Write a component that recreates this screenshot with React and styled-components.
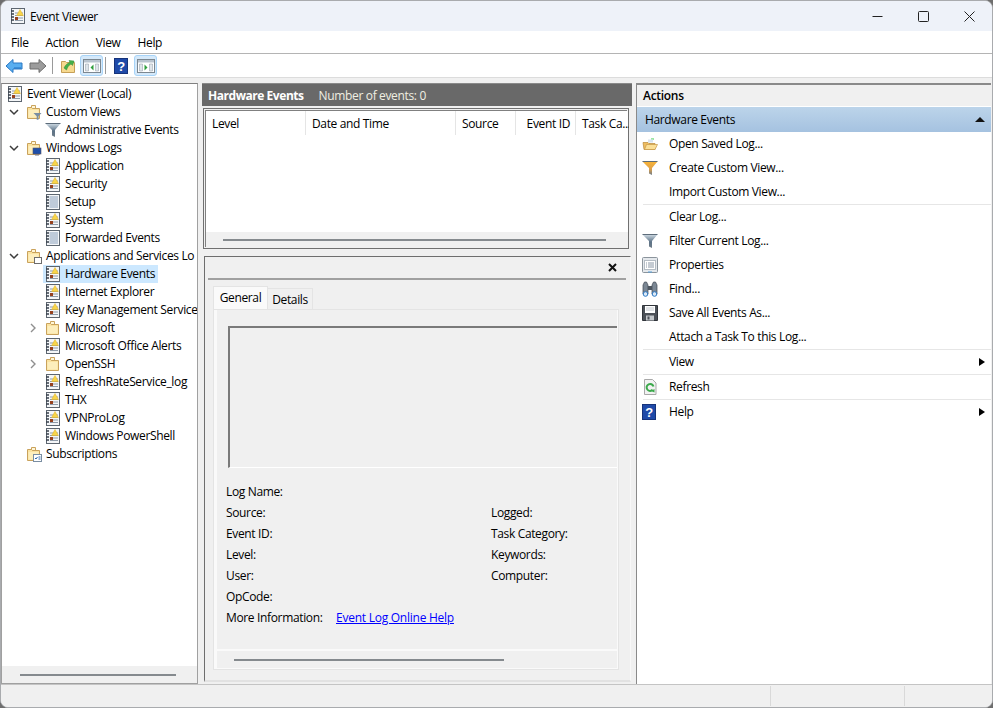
import React from 'react'
import styled, { createGlobalStyle } from 'styled-components'

const Global = createGlobalStyle`
  html, body { margin: 0; padding: 0; background: #6e6e6e; overflow: hidden; }
  body {
    font-family: "Open Sans", "Noto Sans", "Liberation Sans", sans-serif;
    font-size: 12px;
    letter-spacing: -0.35px;
    color: #000;
  }
`

const Win = styled.div`
  width: 993px;
  height: 708px;
  box-sizing: border-box;
  border: 1px solid #a9abae;
  border-radius: 8px;
  overflow: hidden;
  background: #f0f0f0;
  display: flex;
  flex-direction: column;
`
const TitleBar = styled.div`
  height: 30px;
  background: #eef2f9;
  display: flex;
  align-items: center;
  padding-left: 9px;
  flex: none;
`
const TitleText = styled.span`
  flex: 1;
  margin-left: 4px;
`
const WinBtn = styled.div`
  width: 46px;
  height: 30px;
  display: flex;
  align-items: center;
  justify-content: center;
`
const MenuBar = styled.div`
  height: 22px;
  background: #fff;
  border-bottom: 1px solid #b4b4b4;
  display: flex;
  align-items: center;
  padding-left: 1px;
  flex: none;
`
const MenuItem = styled.span`
  padding: 0 8px 0 9px;
`
const ToolBar = styled.div`
  height: 23px;
  background: #fff;
  border-bottom: 1px solid #dcdcdc;
  display: flex;
  align-items: center;
  padding-left: 2px;
  flex: none;
`
const ToolBtn = styled.div`
  width: ${p => p.$w || 22}px;
  height: 21px;
  box-sizing: border-box;
  display: flex;
  align-items: center;
  justify-content: center;
  border-radius: 3px;
  margin-right: ${p => p.$mr || 0}px;
  ${p => p.$on && 'background: #d5e9fa; border: 1px solid #a8d4f8;'}
`
const ToolSep = styled.div`
  width: 1px;
  height: 17px;
  background: #9a9a9a;
  margin: 0 4px 0 2px;
`
const Panes = styled.div`
  flex: 1;
  min-height: 0;
  display: flex;
  padding-top: 5px;
  background: #f0f0f0;
`
const TreePane = styled.div`
  width: 197px;
  box-sizing: border-box;
  margin-right: 2px;
  border: 1px solid #a0a0a0;
  border-top-color: #808080;
  background: #fff;
  display: flex;
  flex-direction: column;
  flex: none;
`
const TreeBody = styled.div`
  flex: 1;
  min-height: 0;
  padding-top: 1px;
  overflow: hidden;
`
const Row = styled.div`
  height: 18px;
  display: flex;
  align-items: center;
  white-space: nowrap;
  padding-left: ${p => p.$indent}px;
`
const Chevron = styled.div`
  width: 12px;
  margin-right: 6px;
  height: 18px;
  display: flex;
  align-items: center;
  justify-content: center;
  flex: none;
`
const TreeItem = styled.div`
  height: 18px;
  display: flex;
  align-items: center;
  margin-left: -2px;
  padding: 0 3px 0 2px;
  ${p => p.$sel && 'background: #cce8ff;'}
`
const TreeIcon = styled.div`
  width: 16px;
  height: 16px;
  flex: none;
  margin-right: 3px;
`
const Label = styled.span`
  padding-left: 1px;
  margin-bottom: 1px;
`
const HScroll = styled.div`
  height: ${p => p.$h || 17}px;
  background: #f0f0f0;
  flex: none;
  display: flex;
  align-items: center;
  padding-left: ${p => p.$left}px;
  ${p => p.$line && 'border-top: 2px solid #fafafa;'}
`
const Thumb = styled.div`
  width: ${p => p.$w}px;
  height: 2px;
  background: #858a8e;
`
const Center = styled.div`
  width: 432px;
  margin-right: 4px;
  flex: none;
  display: flex;
  flex-direction: column;
`
const CenterHead = styled.div`
  height: 23px;
  box-sizing: border-box;
  background: #696969;
  border-top: 1px solid #8a8a8a;
  color: #fff;
  display: flex;
  align-items: center;
  padding-left: 6px;
  gap: 15px;
  flex: none;
  margin: 0 0 0 2px;
`
const CenterTitle = styled.b`
  font-weight: 700;
  letter-spacing: -0.45px;
`
const CenterCount = styled.span`
  color: #f0efe2;
`
const ListBox = styled.div`
  height: 141px;
  margin: 2px 3px 0 3px;
  box-sizing: border-box;
  border: 1px solid #707070;
  padding: 2px 0 0 2px;
  background: #f0f0f0;
  display: flex;
  flex: none;
`
const ListInner = styled.div`
  flex: 1;
  min-width: 0;
  background: #fff;
  display: flex;
  flex-direction: column;
  justify-content: space-between;
  box-shadow: -1px -1px 0 #808080;
`
const Columns = styled.div`
  height: 24px;
  display: flex;
`
const Col = styled.div`
  width: ${p => p.$w}px;
  box-sizing: border-box;
  flex: none;
  display: flex;
  align-items: center;
  padding-left: 6px;
  border-right: ${p => (p.$last ? 'none' : '1px solid #e5e5e5')};
  justify-content: ${p => (p.$right ? 'flex-end' : 'flex-start')};
  padding-right: ${p => (p.$right ? '5px' : 0)};
  white-space: nowrap;
  overflow: hidden;
`
const Detail = styled.div`
  flex: 1;
  min-height: 0;
  margin: 7px 1px 2px 4px;
  box-sizing: border-box;
  border: 1px solid #f8f8f8;
  border-top: 1px solid #6e6e6e;
  border-left: 1px solid #6e6e6e;
  border-bottom: 2px solid #e2e2e2;
  display: flex;
  flex-direction: column;
  padding: 0 4px 0 3px;
`
const DetailTop = styled.div`
  height: 21px;
  border-bottom: 2px solid #a0a0a0;
  display: flex;
  align-items: center;
  justify-content: flex-end;
  padding-right: 9px;
  flex: none;
`
const TabRow = styled.div`
  display: flex;
  align-items: flex-end;
  height: 23px;
  margin: 6px 0 0 5px;
  flex: none;
`
const Tab = styled.div`
  width: ${p => p.$w}px;
  height: ${p => (p.$on ? 23 : 21)}px;
  box-sizing: border-box;
  display: flex;
  align-items: center;
  justify-content: center;
  border: 1px solid #e4e4e4;
  border-bottom: none;
  background: ${p => (p.$on ? '#fafafa' : '#f0f0f0')};
  ${p => p.$on && 'padding-bottom: 2px;'}
  ${p => !p.$on && 'border-left: none;'}
`
const TabBody = styled.div`
  flex: 1;
  min-height: 0;
  margin: 0 7px 10px 5px;
  border: 1px solid #e4e4e4;
  background: #fafafa;
  padding: 0 1px 1px 3px;
  display: flex;
`
const TabInner = styled.div`
  flex: 1;
  min-width: 0;
  background: #f0f0f0;
  display: flex;
  flex-direction: column;
`
const MsgBox = styled.div`
  height: 142px;
  margin: 16px 0 0 11px;
  box-sizing: border-box;
  border: 2px solid #7a7a7a;
  border-right: none;
  border-bottom: 1px solid #fff;
  flex: none;
`
const Fields = styled.div`
  flex: 1;
  min-height: 0;
  padding: 13px 0 0 9px;
  display: grid;
  grid-template-columns: 110px 155px 1fr;
  grid-auto-rows: 21px;
  align-items: center;
`
const Wide = styled.div`
  grid-column: 1 / -1;
  display: flex;
`
const MoreLabel = styled.span`
  width: 110px;
  flex: none;
`
const HelpLink = styled.a`
  color: #0000ff;
  text-decoration: underline;
  letter-spacing: -0.25px;
`
const Actions = styled.div`
  width: 354px;
  flex: none;
  display: flex;
  flex-direction: column;
  background: #fff;
  border-left: 1px solid #8a8a8a;
`
const ActionsTitle = styled.div`
  height: 24px;
  box-sizing: border-box;
  border-top: 2px solid #8a8a8a;
  background: #f0f0f0;
  border-bottom: 1px solid #fff;
  display: flex;
  align-items: center;
  padding-left: 6px;
  font-weight: 600;
  letter-spacing: -0.3px;
  flex: none;
`
const ActionsHead = styled.div`
  height: 25px;
  background: linear-gradient(#bcd4ea, #a5c2e0);
  display: flex;
  align-items: center;
  padding: 0 6px 0 8px;
  justify-content: space-between;
  flex: none;
`
const ActionRow = styled.div`
  height: 24px;
  display: flex;
  align-items: center;
  padding-left: 5px;
  padding-right: 6px;
  flex: none;
`
const ActionIcon = styled.div`
  width: 16px;
  height: 16px;
  margin-right: 11px;
  flex: none;
`
const ActionText = styled.span`
  flex: 1;
  margin-bottom: 2px;
`
const Caret = styled.div`
  width: 0;
  height: 0;
  border-left: 6px solid #000;
  border-top: 4.5px solid transparent;
  border-bottom: 4.5px solid transparent;
`
const CaretUp = styled.div`
  width: 0;
  height: 0;
  border-bottom: 5px solid #111;
  border-left: 5px solid transparent;
  border-right: 5px solid transparent;
`
const ActionSep = styled.div`
  height: 1px;
  margin: 0 0 0 6px;
  background: #e6e6e6;
  flex: none;
`
const StatusBar = styled.div`
  height: 23px;
  box-sizing: border-box;
  border-top: 1px solid #c4c4c4;
  flex: none;
  display: flex;
  justify-content: flex-end;
  background: #f0f0f0;
`
const StatusCell = styled.div`
  width: ${p => p.$w}px;
  margin: 1px 0;
  border-left: 1px solid #d9d9d9;
`

const LogIcon = () => (
  <svg width="16" height="16" viewBox="0 0 16 16">
    <rect x="1.5" y="0.5" width="13" height="15" fill="#f4f6f8" stroke="#5d6670" />
    <path d="M1 3h3M1 6h3M1 9h3M1 12h3" stroke="#39424c" strokeWidth="1.4" />
    <path d="M5 5h8M5 7.5h8M5 10h8M5 12.5h8" stroke="#8e9aa8" />
    <path d="M10 1.5l3.4 6H6.6z" fill="#f8d54a" stroke="#e3b321" strokeWidth=".5" />
    <rect x="5" y="9" width="3" height="3" fill="#97411e" />
  </svg>
)
const PlainLogIcon = () => (
  <svg width="16" height="16" viewBox="0 0 16 16">
    <rect x="1.5" y="0.5" width="13" height="15" fill="#f4f6f8" stroke="#5d6670" />
    <path d="M1 3h3M1 6h3M1 9h3M1 12h3" stroke="#39424c" strokeWidth="1.4" />
    <path d="M4.5 3h8.5M4.5 5h8.5M4.5 7h8.5M4.5 9h8.5M4.5 11h8.5M4.5 13h8.5" stroke="#8aa0bb" />
  </svg>
)
const Folder = ({ children }) => (
  <svg width="16" height="16" viewBox="0 0 16 16">
    <path d="M5.5 1.5h4v3h-4z" fill="#fff6d8" stroke="#caa35c" />
    <path d="M1.5 3.5h4l1 1h7v10h-12z" fill="#fbe3a0" stroke="#c9a25c" />
    <path d="M2.5 6h10v7.5h-10z" fill="#fdeebc" />
    {children}
  </svg>
)
const Funnel = ({ id = 'fg', top = '#cfdbe4', bottom = '#5d7387' }) => (
  <svg width="16" height="16" viewBox="0 0 16 16">
    <defs>
      <linearGradient id={id} x1="0" y1="0" x2="0" y2="1">
        <stop offset="0" stopColor={top} />
        <stop offset="0.55" stopColor={bottom} />
        <stop offset="1" stopColor="#6f7c88" />
      </linearGradient>
    </defs>
    <path d="M0.5 1.5h15l-5.5 6.500v7l-3-1.500V8z" fill={`url(#${id})`} />
    <path d="M0.5 1.500h15" stroke="#5d6c7a" />
  </svg>
)
const FolderFunnel = () => (
  <Folder>
    <path d="M7.5 9h8l-3 3.200v3.600h-1.800v-3.600z" fill="#7a8ea2" />
  </Folder>
)
const FolderScreen = () => (
  <Folder>
    <rect x="7" y="8" width="8" height="6" fill="#1f4fa8" stroke="#556" strokeWidth=".6" />
    <path d="M9 15h4" stroke="#778" />
  </Folder>
)
const FolderPanel = () => (
  <Folder>
    <rect x="8.5" y="9.5" width="7" height="6" fill="#fff" stroke="#6d6d6d" />
  </Folder>
)
const FolderSub = () => (
  <Folder>
    <rect x="7.5" y="8.5" width="8" height="7" fill="#fff" stroke="#7a8ea2" />
    <path d="M9 12l1 1 1.500-2M12.500 11h2M12.500 13h2" stroke="#2a66b0" fill="none" />
  </Folder>
)
const ChevronDown = () => (
  <svg width="10" height="7" viewBox="0 0 10 7">
    <path d="M1 1l4 4 4-4" fill="none" stroke="#3c3c3c" strokeWidth="1.5" />
  </svg>
)
const ChevronRight = () => (
  <svg width="7" height="10" viewBox="0 0 7 10">
    <path d="M1 1l4 4-4 4" fill="none" stroke="#8f8f8f" strokeWidth="1.4" />
  </svg>
)
const BackArrow = () => (
  <svg width="18" height="16" viewBox="0 0 18 16">
    <path d="M1 8l7-6.500V5h9v6H8v3.500z" fill="#58aef0" stroke="#2a78c4" />
    <path d="M9 9.500h7v1H9z" fill="#1f6fc0" />
  </svg>
)
const ForwardArrow = () => (
  <svg width="18" height="16" viewBox="0 0 18 16">
    <path d="M17 8l-7-6.500V5H1v6h9v3.500z" fill="#9c9c9c" stroke="#6d6d6d" />
  </svg>
)
const UpFolder = () => (
  <svg width="16" height="16" viewBox="0 0 16 16">
    <path d="M1.500 3.500h4l1 1h8v10h-13z" fill="#f7d98f" stroke="#c6a058" />
    <path d="M4 10c1.500-3 3-4.500 6-5.500L9 2.500l5 .5-1.500 4.500L11 6C9 7 7.500 9 6.500 12z" fill="#46b04a" stroke="#2f8c34" strokeWidth=".5" />
  </svg>
)
const PanelIcon = ({ right }) => (
  <svg width="18" height="14" viewBox="0 0 18 14">
    <rect x=".5" y=".5" width="17" height="13" fill="#fff" stroke="#7c8790" />
    <rect x="1" y="1" width="16" height="2.500" fill="#b9c4cf" />
    <path d="M2.500 5h3v7h-3zM12.500 5h3v7h-3z" fill="#dfe5ea" stroke="#8f9aa5" strokeWidth=".5" />
    <path d={right ? 'M7.500 5.500l3 3-3 3z' : 'M10.500 5.500l-3 3 3 3z'} fill="#2e9e3c" />
  </svg>
)
const HelpIcon = () => (
  <svg width="14" height="16" viewBox="0 0 14 16">
    <rect x=".5" y=".5" width="13" height="15" fill="#1f4aa8" stroke="#16337a" />
    <text x="7" y="13" fontSize="13" fontWeight="700" textAnchor="middle" fill="#fff" fontFamily="Liberation Sans">?</text>
  </svg>
)
const OpenLog = () => (
  <svg width="16" height="16" viewBox="0 0 16 16">
    <path d="M1 6.500h5l1 1h6v6H2z" fill="#eebc5f" stroke="#b98a3a" strokeWidth=".7" />
    <path d="M2.500 13.500l2-5h11l-2.500 5z" fill="#fbdf97" stroke="#c79a4b" strokeWidth=".7" />
    <path d="M9 3h3" stroke="#3bd04a" />
    <rect x="6" y="3.500" width="5" height="3" fill="#d8e4f0" />
  </svg>
)
const PropsIcon = () => (
  <svg width="16" height="16" viewBox="0 0 16 16">
    <rect x=".5" y=".5" width="15" height="15" rx="1" fill="#e4e8ec" stroke="#8b949c" />
    <rect x="2.500" y="3.500" width="11" height="9" fill="#fff" stroke="#b4bcc4" />
    <path d="M4 6h1M6 6h6M4 8h1M6 8h6M4 10h1M6 10h6" stroke="#8a97a6" />
    <path d="M6 15h4" stroke="#5aa0d8" />
  </svg>
)
const FindIcon = () => (
  <svg width="16" height="16" viewBox="0 0 16 16">
    <path d="M1 13V4l1.500-3h2L6 4v9zM10 13V4l1.500-3h2L15 4v9z" fill="#7b8794" stroke="#3d4650" strokeWidth=".7" />
    <path d="M6 5h4v4H6z" fill="#4d5660" />
    <circle cx="3.500" cy="13" r="2.300" fill="#dce9f6" stroke="#2b78c4" />
    <circle cx="12.500" cy="13" r="2.300" fill="#dce9f6" stroke="#2b78c4" />
  </svg>
)
const SaveIcon = () => (
  <svg width="16" height="16" viewBox="0 0 16 16">
    <path d="M.5.5h15v15H.5z" fill="#4c5158" stroke="#30343a" />
    <rect x="3" y="1" width="10" height="7" fill="#fff" />
    <path d="M4 3h8M4 5h8" stroke="#c2c8ce" />
    <rect x="4" y="10.500" width="8" height="5" fill="#c4c8cc" />
    <rect x="5.500" y="11.500" width="2" height="3" fill="#4c5158" />
  </svg>
)
const RefreshIcon = () => (
  <svg width="16" height="16" viewBox="0 0 16 16">
    <path d="M2.500.5h8l3.500 3.500v11.500H2.500z" fill="#f2f2f2" stroke="#a8a8a8" />
    <path d="M11.500 7.500a3.500 3.500 0 1 0-.8 3.300" fill="none" stroke="#3ca94c" strokeWidth="2" />
    <path d="M9 12l3.500 1.500V10z" fill="#3ca94c" />
  </svg>
)
const MinIcon = () => (
  <svg width="11" height="11" viewBox="0 0 11 11"><path d="M0.500 5.500h10" stroke="#222" /></svg>
)
const MaxIcon = () => (
  <svg width="11" height="11" viewBox="0 0 11 11"><rect x=".5" y=".5" width="10" height="10" rx="1" fill="none" stroke="#222" /></svg>
)
const CloseIcon = () => (
  <svg width="11" height="11" viewBox="0 0 11 11"><path d="M.5.5l10 10M10.500.5l-10 10" stroke="#222" /></svg>
)
const SmallClose = () => (
  <svg width="9" height="9" viewBox="0 0 9 9"><path d="M1 1l7 7M8 1L1 8" stroke="#111" strokeWidth="2" /></svg>
)

const tree = [
  { level: 0, icon: <LogIcon />, text: 'Event Viewer (Local)' },
  { level: 1, open: true, icon: <FolderFunnel />, text: 'Custom Views' },
  { level: 2, icon: <Funnel id="fg-admin" />, text: 'Administrative Events' },
  { level: 1, open: true, icon: <FolderScreen />, text: 'Windows Logs' },
  { level: 2, icon: <LogIcon />, text: 'Application' },
  { level: 2, icon: <LogIcon />, text: 'Security' },
  { level: 2, icon: <PlainLogIcon />, text: 'Setup' },
  { level: 2, icon: <LogIcon />, text: 'System' },
  { level: 2, icon: <PlainLogIcon />, text: 'Forwarded Events' },
  { level: 1, open: true, icon: <FolderPanel />, text: 'Applications and Services Lo' },
  { level: 2, icon: <LogIcon />, text: 'Hardware Events', sel: true },
  { level: 2, icon: <LogIcon />, text: 'Internet Explorer' },
  { level: 2, icon: <LogIcon />, text: 'Key Management Service' },
  { level: 2, closed: true, icon: <Folder />, text: 'Microsoft' },
  { level: 2, icon: <LogIcon />, text: 'Microsoft Office Alerts' },
  { level: 2, closed: true, icon: <Folder />, text: 'OpenSSH' },
  { level: 2, icon: <LogIcon />, text: 'RefreshRateService_log' },
  { level: 2, icon: <LogIcon />, text: 'THX' },
  { level: 2, icon: <LogIcon />, text: 'VPNProLog' },
  { level: 2, icon: <LogIcon />, text: 'Windows PowerShell' },
  { level: 1, icon: <FolderSub />, text: 'Subscriptions' },
]

const actionGroups = [
  [
    { icon: <OpenLog />, text: 'Open Saved Log...' },
    { icon: <Funnel id="fg-create" top="#f9b437" bottom="#e0a24a" />, text: 'Create Custom View...' },
    { text: 'Import Custom View...' },
  ],
  [
    { text: 'Clear Log...' },
    { icon: <Funnel id="fg-filter" />, text: 'Filter Current Log...' },
    { icon: <PropsIcon />, text: 'Properties' },
    { icon: <FindIcon />, text: 'Find...' },
    { icon: <SaveIcon />, text: 'Save All Events As...' },
    { text: 'Attach a Task To this Log...' },
  ],
  [{ text: 'View', more: true }],
  [{ icon: <RefreshIcon />, text: 'Refresh' }],
  [{ icon: <HelpIcon />, text: 'Help', more: true }],
]

// left padding of a row, by tree level and whether a chevron comes first
const rowIndent = (level, hasChevron) => {
  if (level === 0) return 5
  if (level === 1) return hasChevron ? 6 : 24
  return hasChevron ? 25 : 43
}

const TreeRow = ({ item }) => {
  const hasChevron = item.open || item.closed
  return (
    <Row $indent={rowIndent(item.level, hasChevron)}>
      {hasChevron && <Chevron>{item.open ? <ChevronDown /> : <ChevronRight />}</Chevron>}
      <TreeItem $sel={item.sel}>
        <TreeIcon>{item.icon}</TreeIcon>
        <Label>{item.text}</Label>
      </TreeItem>
    </Row>
  )
}

export default function App() {
  return (
    <Win>
      <Global />
      <TitleBar>
        <LogIcon />
        <TitleText>Event Viewer</TitleText>
        <WinBtn><MinIcon /></WinBtn>
        <WinBtn><MaxIcon /></WinBtn>
        <WinBtn><CloseIcon /></WinBtn>
      </TitleBar>
      <MenuBar>
        <MenuItem>File</MenuItem>
        <MenuItem>Action</MenuItem>
        <MenuItem>View</MenuItem>
        <MenuItem>Help</MenuItem>
      </MenuBar>
      <ToolBar>
        <ToolBtn><BackArrow /></ToolBtn>
        <ToolBtn $w={25}><ForwardArrow /></ToolBtn>
        <ToolSep />
        <ToolBtn $mr={1}><UpFolder /></ToolBtn>
        <ToolBtn $on $w={23}><PanelIcon /></ToolBtn>
        <ToolSep />
        <ToolBtn $mr={2}><HelpIcon /></ToolBtn>
        <ToolBtn $on $w={23}><PanelIcon right /></ToolBtn>
      </ToolBar>
      <Panes>
        <TreePane>
          <TreeBody>
            {tree.map(item => <TreeRow key={item.text} item={item} />)}
          </TreeBody>
          <HScroll $left={18}><Thumb $w={156} /></HScroll>
        </TreePane>
        <Center>
          <CenterHead>
            <CenterTitle>Hardware Events</CenterTitle>
            <CenterCount>Number of events: 0</CenterCount>
          </CenterHead>
          <ListBox>
            <ListInner>
              <Columns>
                <Col $w={100}>Level</Col>
                <Col $w={150}>Date and Time</Col>
                <Col $w={60}>Source</Col>
                <Col $w={60} $right>Event ID</Col>
                <Col $w={53} $last>Task Ca...</Col>
              </Columns>
              <HScroll $h={16} $left={17}><Thumb $w={383} /></HScroll>
            </ListInner>
          </ListBox>
          <Detail>
            <DetailTop><SmallClose /></DetailTop>
            <TabRow>
              <Tab $on $w={55}>General</Tab>
              <Tab $w={45}>Details</Tab>
            </TabRow>
            <TabBody>
              <TabInner>
                <MsgBox />
                <Fields>
                  <Wide>Log Name:</Wide>
                  <span>Source:</span><span /><span>Logged:</span>
                  <span>Event ID:</span><span /><span>Task Category:</span>
                  <span>Level:</span><span /><span>Keywords:</span>
                  <span>User:</span><span /><span>Computer:</span>
                  <Wide>OpCode:</Wide>
                  <Wide>
                    <MoreLabel>More Information:</MoreLabel>
                    <HelpLink href="#">Event Log Online Help</HelpLink>
                  </Wide>
                </Fields>
                <HScroll $left={17} $line><Thumb $w={270} /></HScroll>
              </TabInner>
            </TabBody>
          </Detail>
        </Center>
        <Actions>
          <ActionsTitle>Actions</ActionsTitle>
          <ActionsHead>Hardware Events<CaretUp /></ActionsHead>
          {actionGroups.map((group, i) => (
            <React.Fragment key={i}>
              {i > 0 && <ActionSep />}
              {group.map(a => (
                <ActionRow key={a.text}>
                  <ActionIcon>{a.icon}</ActionIcon>
                  <ActionText>{a.text}</ActionText>
                  {a.more && <Caret />}
                </ActionRow>
              ))}
            </React.Fragment>
          ))}
        </Actions>
      </Panes>
      <StatusBar>
        <StatusCell $w={133} />
        <StatusCell $w={87} />
      </StatusBar>
    </Win>
  )
}
